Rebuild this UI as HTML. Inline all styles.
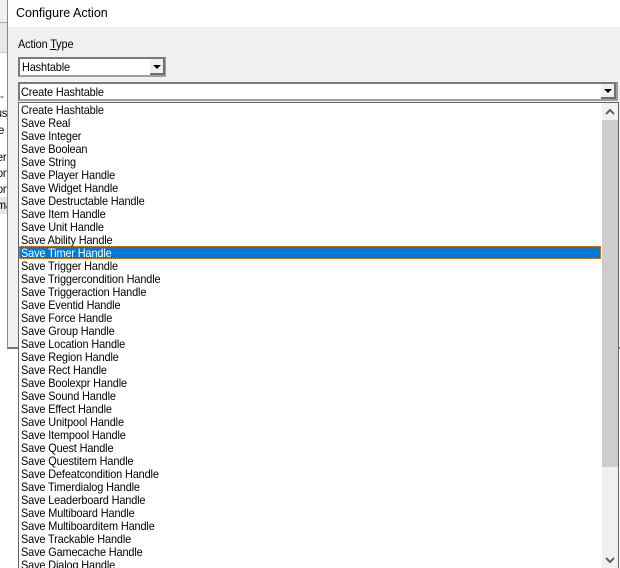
<!DOCTYPE html>
<html><head><meta charset="utf-8"><style>
html,body{margin:0;padding:0}
body{width:620px;height:568px;position:relative;overflow:hidden;background:#fff;font-family:"Liberation Sans",sans-serif;font-size:12px;color:#000}
div{position:absolute;box-sizing:border-box}
.t{white-space:nowrap;line-height:13px;height:13px}
.s{transform:scaleX(.91);transform-origin:0 0;letter-spacing:-.15px}
.sel{border:2px solid #7a7a7a;border-right-color:#a0a0a0;border-bottom-color:#a0a0a0;background:#fff}
.b{background:#f0f0f0;border-right:2px solid #707070;border-bottom:2px solid #707070}
.a{width:0;height:0;border-left:4px solid transparent;border-right:4px solid transparent;border-top:4px solid #000}
#l .t{left:3px;transform:scaleX(.91);transform-origin:0 0;letter-spacing:-.15px}
</style></head><body>
<div style="left:0;top:0;width:8px;height:22px;background:#f0f0f0"></div>
<div style="left:0;top:22px;width:8px;height:31px;background:#e8e8e8;border-top:1px solid #aaa;border-bottom:1px solid #ccc"></div>
<div style="left:0;top:197px;width:8px;height:17px;background:#e4e4e4"></div>
<div class="t" style="left:0;top:90px;color:#333">-</div>
<div class="t s" style="left:-4px;top:107px">us</div>
<div class="t s" style="left:-4px;top:124px">ie</div>
<div class="t s" style="left:-3px;top:151px">er</div>
<div class="t s" style="left:-3px;top:167px">on</div>
<div class="t s" style="left:-3px;top:183px">on</div>
<div class="t s" style="left:-3px;top:199px">ma</div>
<div style="left:7px;top:0;width:613px;height:349px;background:#fff;border-left:1px solid #888;border-bottom:2px solid #777"></div>
<div style="left:8px;top:27px;width:612px;height:320px;background:#f0f0f0"></div>
<div class="t" style="left:16px;top:7px;font-size:12.5px">Configure Action</div>
<div class="t s" style="left:18px;top:38px">Action <u>T</u>ype</div>
<div class="sel" style="left:18px;top:57px;width:148px;height:20px"></div>
<div class="t s" style="left:22px;top:61px">Hashtable</div>
<div class="b" style="left:150px;top:59px;width:15px;height:16px"></div>
<div class="a" style="left:153px;top:65px"></div>
<div class="sel" style="left:18px;top:82px;width:600px;height:19px"></div>
<div class="t s" style="left:21px;top:86px">Create Hashtable</div>
<div class="b" style="left:601px;top:84px;width:15px;height:15px"></div>
<div class="a" style="left:604px;top:89px"></div>
<div style="left:18px;top:102px;width:601px;height:466px;background:#fff;border:1px solid #666;border-bottom:0"></div>
<div style="left:602px;top:103px;width:16px;height:465px;background:#f0f0f0"></div>
<div style="left:602px;top:120px;width:16px;height:347px;background:#cdcdcd"></div>
<svg style="position:absolute;left:602px;top:103px" width="16" height="17"><path d="M4 11L8 7L12 11" fill="none" stroke="#606060" stroke-width="2"/></svg>
<svg style="position:absolute;left:602px;top:552px" width="16" height="16"><path d="M4 6L8 10L12 6" fill="none" stroke="#606060" stroke-width="2"/></svg>
<div style="left:19px;top:246px;width:582px;height:13px;background:#0078d7;outline:1px dotted #e09030;outline-offset:-1px"></div>
<div id="l" style="left:18px;top:103px;width:580px;height:465px;overflow:hidden">
<div class="t" style="top:1px">Create Hashtable</div>
<div class="t" style="top:14px">Save Real</div>
<div class="t" style="top:27px">Save Integer</div>
<div class="t" style="top:40px">Save Boolean</div>
<div class="t" style="top:53px">Save String</div>
<div class="t" style="top:66px">Save Player Handle</div>
<div class="t" style="top:79px">Save Widget Handle</div>
<div class="t" style="top:92px">Save Destructable Handle</div>
<div class="t" style="top:105px">Save Item Handle</div>
<div class="t" style="top:118px">Save Unit Handle</div>
<div class="t" style="top:131px">Save Ability Handle</div>
<div class="t" style="top:144px;color:#fff">Save Timer Handle</div>
<div class="t" style="top:157px">Save Trigger Handle</div>
<div class="t" style="top:170px">Save Triggercondition Handle</div>
<div class="t" style="top:183px">Save Triggeraction Handle</div>
<div class="t" style="top:196px">Save Eventid Handle</div>
<div class="t" style="top:209px">Save Force Handle</div>
<div class="t" style="top:222px">Save Group Handle</div>
<div class="t" style="top:235px">Save Location Handle</div>
<div class="t" style="top:248px">Save Region Handle</div>
<div class="t" style="top:261px">Save Rect Handle</div>
<div class="t" style="top:274px">Save Boolexpr Handle</div>
<div class="t" style="top:287px">Save Sound Handle</div>
<div class="t" style="top:300px">Save Effect Handle</div>
<div class="t" style="top:313px">Save Unitpool Handle</div>
<div class="t" style="top:326px">Save Itempool Handle</div>
<div class="t" style="top:339px">Save Quest Handle</div>
<div class="t" style="top:352px">Save Questitem Handle</div>
<div class="t" style="top:365px">Save Defeatcondition Handle</div>
<div class="t" style="top:378px">Save Timerdialog Handle</div>
<div class="t" style="top:391px">Save Leaderboard Handle</div>
<div class="t" style="top:404px">Save Multiboard Handle</div>
<div class="t" style="top:417px">Save Multiboarditem Handle</div>
<div class="t" style="top:430px">Save Trackable Handle</div>
<div class="t" style="top:443px">Save Gamecache Handle</div>
<div class="t" style="top:456px">Save Dialog Handle</div>
</div>
</body></html>
